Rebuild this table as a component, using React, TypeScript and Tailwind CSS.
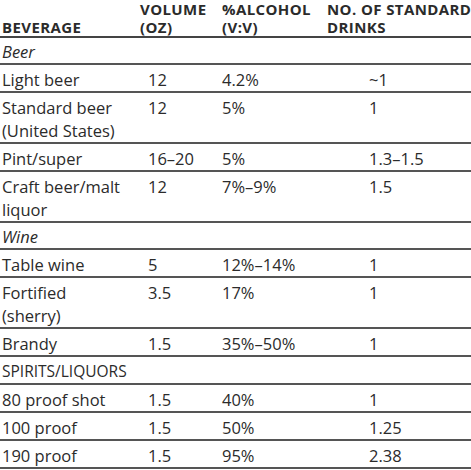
import React from "react";

type Row = { c: string[]; kind?: "italic" | "caps" };

const rows: Row[] = [
  { c: ["Beer"], kind: "italic" },
  { c: ["Light beer", "12", "4.2%", "~1"] },
  { c: ["Standard beer\n(United States)", "12", "5%", "1"] },
  { c: ["Pint/super", "16–20", "5%", "1.3–1.5"] },
  { c: ["Craft beer/malt\nliquor", "12", "7%–9%", "1.5"] },
  { c: ["Wine"], kind: "italic" },
  { c: ["Table wine", "5", "12%–14%", "1"] },
  { c: ["Fortified\n(sherry)", "3.5", "17%", "1"] },
  { c: ["Brandy", "1.5", "35%–50%", "1"] },
  { c: ["SPIRITS/LIQUORS"], kind: "caps" },
  { c: ["80 proof shot", "1.5", "40%", "1"] },
  { c: ["100 proof", "1.5", "50%", "1.25"] },
  { c: ["190 proof", "1.5", "95%", "2.38"] },
];

export default function App() {
  return (
    <div
      className="w-[471px] h-[470px] bg-white text-[#2b2b2b] overflow-hidden"
      style={{ fontFamily: '"Open Sans", "Noto Sans", sans-serif' }}
    >
      <div className="grid grid-cols-[140px_82px_104px_1fr] border-b-2 border-[#444] text-[15px] font-bold leading-[18px] tracking-[0.4px] h-[38px]">
        <div className="pl-[2px] pt-[18px]">BEVERAGE</div>
        <div className="whitespace-pre-line">{"VOLUME\n(OZ)"}</div>
        <div className="whitespace-pre-line">{"%ALCOHOL\n(V:V)"}</div>
        <div className="pl-[1px] whitespace-pre">{"NO. OF STANDARD\nDRINKS"}</div>
      </div>
      {rows.map((r, i) => (
        <div
          key={i}
          className={
            "grid grid-cols-[140px_82px_104px_1fr] border-b-2 border-[#555] text-[16.5px] leading-[23px] " +
            (r.kind === "italic" ? "pt-[2px]" : "pt-[3px]")
          }
        >
          {r.c.length === 1 ? (
            <div
              className={
                "col-span-4 pl-[2px] " +
                (r.kind === "italic" ? "italic" : "text-[15.5px]")
              }
            >
              {r.c[0]}
            </div>
          ) : (
            <>
              <div className="pl-[2px] whitespace-pre-line">{r.c[0]}</div>
              <div className="pl-[8px]">{r.c[1]}</div>
              <div>{r.c[2]}</div>
              <div className="pl-[43px]">{r.c[3]}</div>
            </>
          )}
        </div>
      ))}
    </div>
  );
}
